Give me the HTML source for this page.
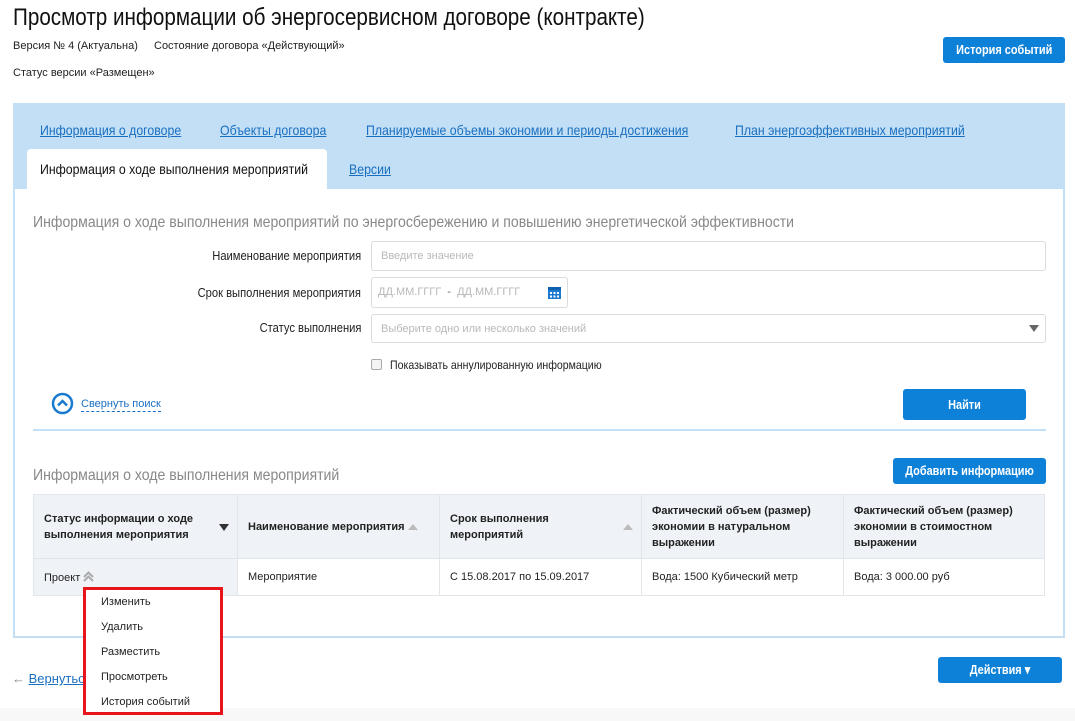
<!DOCTYPE html>
<html><head><meta charset="utf-8"><style>
*{margin:0;padding:0;box-sizing:border-box}
body{width:1075px;height:721px;background:#fff;font-family:"Liberation Sans",sans-serif;color:#222;position:relative;overflow:hidden}
.a{position:absolute;white-space:nowrap}
.n{transform:scaleX(0.88);transform-origin:left center}
.s{font-size:11px}
.btn{position:absolute;background:#0d80d8;color:#fff;border-radius:3px;text-align:center;font-weight:bold;font-size:13px;white-space:nowrap}
.btn span{display:inline-block;transform:scaleX(0.84)}
a{color:#1a6fc0;text-decoration:underline}
.lab{position:absolute;right:714px;font-size:13px;text-align:right;white-space:nowrap;transform:scaleX(0.86);transform-origin:right center}
.inp{position:absolute;border:1px solid #dcdcdc;border-radius:3px;background:#fff;font-size:11px;color:#b8b8b8;padding-left:9px;white-space:nowrap}
table{border-collapse:collapse;position:absolute;left:33px;top:494px;width:1012px;font-size:11px}
th{background:#eff3f7;border:1px solid #e2e6ea;text-align:left;font-weight:bold;padding:0 10px;height:64px;vertical-align:middle;line-height:16px;position:relative}
td{border:1px solid #e2e6ea;height:37px;padding:0 10px}
</style></head><body>
<div class="a n" style="left:13px;top:4px;font-size:24px;color:#111;transform:scaleX(0.86)">Просмотр информации об энергосервисном договоре (контракте)</div>
<div class="a s" style="left:13px;top:40px">Версия № 4 (Актуальна)</div>
<div class="a s" style="left:154px;top:40px">Состояние договора «Действующий»</div>
<div class="a s" style="left:13px;top:67px">Статус версии «Размещен»</div>
<div class="btn" style="left:943px;top:37px;width:122px;height:26px;line-height:26px"><span>История событий</span></div>

<div class="a" style="left:13px;top:103px;width:1052px;height:535px;border:2px solid #c2dff5;background:#fff"></div>
<div class="a" style="left:13px;top:103px;width:1052px;height:86px;background:#c2dff5"></div>
<div class="a n" style="left:40px;top:122px;font-size:14px"><a>Информация о договоре</a></div>
<div class="a n" style="left:220px;top:122px;font-size:14px"><a>Объекты договора</a></div>
<div class="a n" style="left:366px;top:122px;font-size:14px"><a>Планируемые объемы экономии и периоды достижения</a></div>
<div class="a n" style="left:735px;top:122px;font-size:14px"><a>План энергоэффективных мероприятий</a></div>
<div class="a" style="left:27px;top:149px;width:300px;height:40px;background:#fff;border-radius:4px 4px 0 0"></div>
<div class="a n" style="left:40px;top:161px;font-size:14px;color:#111">Информация о ходе выполнения мероприятий</div>
<div class="a n" style="left:349px;top:161px;font-size:14px"><a>Версии</a></div>

<div class="a n" style="left:33px;top:214px;font-size:16px;color:#888">Информация о ходе выполнения мероприятий по энергосбережению и повышению энергетической эффективности</div>
<div class="lab" style="top:248px">Наименование мероприятия</div>
<div class="inp" style="left:371px;top:241px;width:675px;height:30px;line-height:28px">Введите значение</div>
<div class="lab" style="top:285px">Срок выполнения мероприятия</div>
<div class="inp" style="left:371px;top:277px;width:197px;height:31px;line-height:29px;padding-left:6px">ДД.ММ.ГГГГ &nbsp;<span style="color:#666">-</span>&nbsp; ДД.ММ.ГГГГ
<svg style="position:absolute;left:176px;top:8px" width="13" height="13" viewBox="0 0 13 13"><rect x="0" y="1" width="13" height="12" fill="#1a7ad0"/><rect x="0" y="1" width="13" height="3" fill="#0d5fb0"/><g fill="#fff"><rect x="2" y="6" width="2" height="2"/><rect x="5.5" y="6" width="2" height="2"/><rect x="9" y="6" width="2" height="2"/><rect x="2" y="9.5" width="2" height="2"/><rect x="5.5" y="9.5" width="2" height="2"/><rect x="9" y="9.5" width="2" height="2"/></g></svg></div>
<div class="lab" style="top:320px">Статус выполнения</div>
<div class="inp" style="left:371px;top:314px;width:675px;height:29px;line-height:28px">Выберите одно или несколько значений<span style="position:absolute;right:6px;top:10px;width:0;height:0;border-left:5px solid transparent;border-right:5px solid transparent;border-top:7px solid #666"></span></div>
<div class="a" style="left:371px;top:359px;width:11px;height:11px;border:1px solid #aaa;border-radius:2px;background:#f4f4f4"></div>
<div class="a n" style="left:390px;top:358px;font-size:12px">Показывать аннулированную информацию</div>

<svg class="a" style="left:51px;top:392px" width="23" height="23" viewBox="0 0 23 23"><circle cx="11.5" cy="11.5" r="9.5" fill="none" stroke="#1a7ad0" stroke-width="2.5"/><path d="M7 13.5L11.5 9 16 13.5" fill="none" stroke="#1a7ad0" stroke-width="2.5"/></svg>
<div class="a" style="left:81px;top:397px;font-size:11px;color:#1a6fc0;border-bottom:1px dashed #1a6fc0;line-height:14px">Свернуть поиск</div>
<div class="btn" style="left:903px;top:389px;width:123px;height:31px;line-height:31px"><span>Найти</span></div>
<div class="a" style="left:33px;top:429px;width:1013px;height:2px;background:#c2dff5"></div>

<div class="a n" style="left:33px;top:467px;font-size:16px;color:#888">Информация о ходе выполнения мероприятий</div>
<div class="btn" style="left:893px;top:458px;width:153px;height:26px;line-height:26px"><span>Добавить информацию</span></div>
<table>
<tr><th style="width:204px">Статус информации о ходе<br>выполнения мероприятия<span style="position:absolute;right:8px;top:29px;border-left:5px solid transparent;border-right:5px solid transparent;border-top:7px solid #333"></span></th>
<th style="width:202px">Наименование мероприятия <span style="display:inline-block;border-left:5px solid transparent;border-right:5px solid transparent;border-bottom:6px solid #bbb"></span></th>
<th style="width:202px">Срок выполнения<br>мероприятий<span style="position:absolute;right:8px;top:29px;border-left:5px solid transparent;border-right:5px solid transparent;border-bottom:6px solid #bbb"></span></th>
<th style="width:202px">Фактический объем (размер)<br>экономии в натуральном<br>выражении</th>
<th>Фактический объем (размер)<br>экономии в стоимостном<br>выражении</th></tr>
<tr><td style="background:#eff3f7">Проект <svg width="11" height="11" viewBox="0 0 11 11" style="vertical-align:-1px"><path d="M1 6L5.5 1.5 10 6M1 10L5.5 5.5 10 10" fill="none" stroke="#aaa" stroke-width="2"/></svg></td><td>Мероприятие</td><td>С 15.08.2017 по 15.09.2017</td><td>Вода: 1500 Кубический метр</td><td>Вода: 3 000.00 руб</td></tr>
</table>

<div class="a" style="left:0;top:708px;width:1075px;height:13px;background:#f8f8f8"></div>
<div class="a" style="left:12px;top:671px;font-size:13px;color:#1a6fc0"><span style="color:#888">←</span> <a>Вернуться</a></div>
<div class="btn" style="left:938px;top:657px;width:124px;height:26px;line-height:26px"><span>Действия ▾</span></div>

<div class="a" style="left:83px;top:587px;width:140px;height:128px;border:3px solid #e8141b;background:#fff;font-size:11px">
<div class="a" style="left:15px;top:6px">Изменить</div>
<div class="a" style="left:15px;top:31px">Удалить</div>
<div class="a" style="left:15px;top:56px">Разместить</div>
<div class="a" style="left:15px;top:81px">Просмотреть</div>
<div class="a" style="left:15px;top:106px">История событий</div>
</div>
</body></html>
